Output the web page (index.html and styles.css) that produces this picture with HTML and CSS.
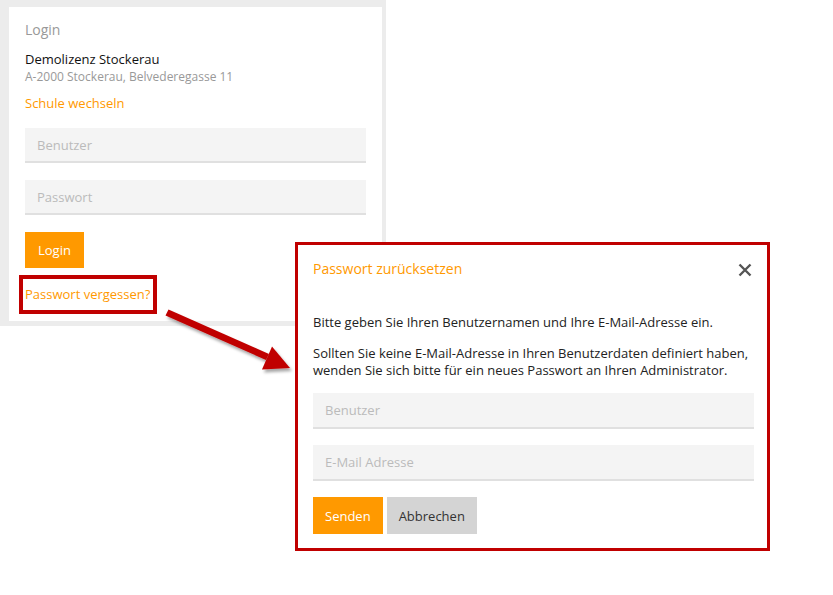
FILE: index.html
```html
<!DOCTYPE html>
<html lang="de">
<head>
<meta charset="utf-8">
<title>Login</title>
<link rel="stylesheet" href="styles.css">
</head>
<body>
<div class="page">
  <div class="login-frame">
    <div class="card">
      <div class="card-title">Login</div>
      <div class="school-name">Demolizenz Stockerau</div>
      <div class="school-addr">A-2000 Stockerau, Belvederegasse 11</div>
      <a class="link switch" href="#">Schule wechseln</a>
      <input class="field f1" type="text" placeholder="Benutzer">
      <input class="field f2" type="password" placeholder="Passwort">
      <button class="btn btn-primary login-btn" type="button">Login</button>
      <div class="forgot-row"><a class="link forgot" href="#">Passwort vergessen?</a></div>
    </div>
  </div>

  <svg class="arrow" width="833" height="595" viewBox="0 0 833 595" aria-hidden="true">
    <defs>
      <filter id="sh" x="-20%" y="-20%" width="140%" height="160%">
        <feDropShadow dx="2" dy="3" stdDeviation="1.6" flood-color="#000" flood-opacity="0.35"/>
      </filter>
    </defs>
    <g filter="url(#sh)" fill="#c00000" stroke="none">
      <polygon points="165.5,315.5 168.5,309.5 269,354 266,360"/>
      <polygon points="272,346.5 290,368 262,369.5"/>
    </g>
  </svg>

  <div class="dialog">
    <div class="dialog-head">
      <span class="dialog-title">Passwort zurücksetzen</span>
      <svg class="close" width="14" height="14" viewBox="0 0 14 14" aria-label="Schließen">
        <path d="M1.5 1.5 L12.5 12.5 M12.5 1.5 L1.5 12.5" stroke="#555" stroke-width="2.4" stroke-linecap="butt"/>
      </svg>
    </div>
    <p class="dtext p1">Bitte geben Sie Ihren Benutzernamen und Ihre E-Mail-Adresse ein.</p>
    <p class="dtext p2">Sollten Sie keine E-Mail-Adresse in Ihren Benutzerdaten definiert haben, wenden Sie sich bitte für ein neues Passwort an Ihren Administrator.</p>
    <input class="field d1" type="text" placeholder="Benutzer">
    <input class="field d2" type="text" placeholder="E-Mail Adresse">
    <div class="btn-row">
      <button class="btn btn-primary" type="button">Senden</button>
      <button class="btn btn-grey" type="button">Abbrechen</button>
    </div>
  </div>
</div>
</body>
</html>
```

FILE: styles.css
```css
* { box-sizing: border-box; }
html, body { margin: 0; padding: 0; background: #fff; }
body {
  font-family: "Open Sans", "Noto Sans", "DejaVu Sans", sans-serif;
  font-size: 13px;
  color: #222;
}
.page {
  position: relative;
  width: 833px;
  height: 595px;
  overflow: hidden;
}
.login-frame {
  width: 386px;
  background: #ececec;
  padding: 7px 4px 5px 9px;
}
.card {
  background: #fff;
  padding: 19px 16px 0 16px;
  height: 314px;
  display: flex;
  flex-direction: column;
  align-items: flex-start;
}
.card-title {
  font-size: 14px;
  line-height: 20px;
  color: #999;
  margin-top: -6px;
  margin-bottom: 10px;
}
.school-name {
  font-size: 13px;
  line-height: 18px;
  color: #111;
}
.school-addr {
  font-size: 12px;
  line-height: 18px;
  color: #999;
}
.link {
  color: #ff9900;
  text-decoration: none;
  font-size: 13px;
  line-height: 18px;
}
.switch { margin-top: 8px; }
.field {
  display: block;
  width: 100%;
  height: 35px;
  border: none;
  border-bottom: 2px solid #e0e0e0;
  background: #f4f4f4;
  padding: 0 12px;
  font-family: inherit;
  font-size: 13px;
  color: #333;
  outline: none;
}
.field::placeholder { color: #bbb; }
.f1 { margin-top: 16px; }
.f2 { margin-top: 17px; }
.btn {
  border: none;
  font-family: inherit;
  font-size: 13px;
  padding: 0 12px;
  height: 36px;
  cursor: pointer;
}
.btn-primary { background: #ff9900; color: #fff; }
.btn-grey { background: #d4d4d4; color: #333; }
.login-btn { margin-top: 17px; padding: 0 13px; }
.forgot-row {
  margin-top: 7px;
  border: 4px solid #c00000;
  margin-left: -6px;
  padding: 6px 2px 6px 2px;
  width: 138px;
  height: 39px;
}
.forgot { white-space: nowrap; }
.arrow {
  position: absolute;
  left: 0;
  top: 0;
  pointer-events: none;
}
.dialog {
  position: absolute;
  left: 295px;
  top: 242px;
  width: 475px;
  height: 309px;
  border: 3px solid #c00000;
  background: #fff;
  padding: 0 13px 0 15px;
}
.dialog-head {
  display: flex;
  justify-content: space-between;
  align-items: center;
  height: 50px;
  padding-bottom: 2px;
  padding-right: 2px;
}
.dialog-title {
  color: #ff9900;
  font-size: 14px;
  line-height: 18px;
}
.close { margin-top: 2px; }
.dtext {
  margin: 0;
  font-size: 13px;
  line-height: 17px;
  color: #222;
}
.p1 { margin-top: 19px; }
.p2 { margin-top: 14px; }
.d1 { margin-top: 14px; height: 36px; }
.d2 { margin-top: 16px; height: 36px; }
.btn-row {
  display: flex;
  gap: 4px;
  margin-top: 16px;
}
.btn-row .btn { height: 37px; }
```
